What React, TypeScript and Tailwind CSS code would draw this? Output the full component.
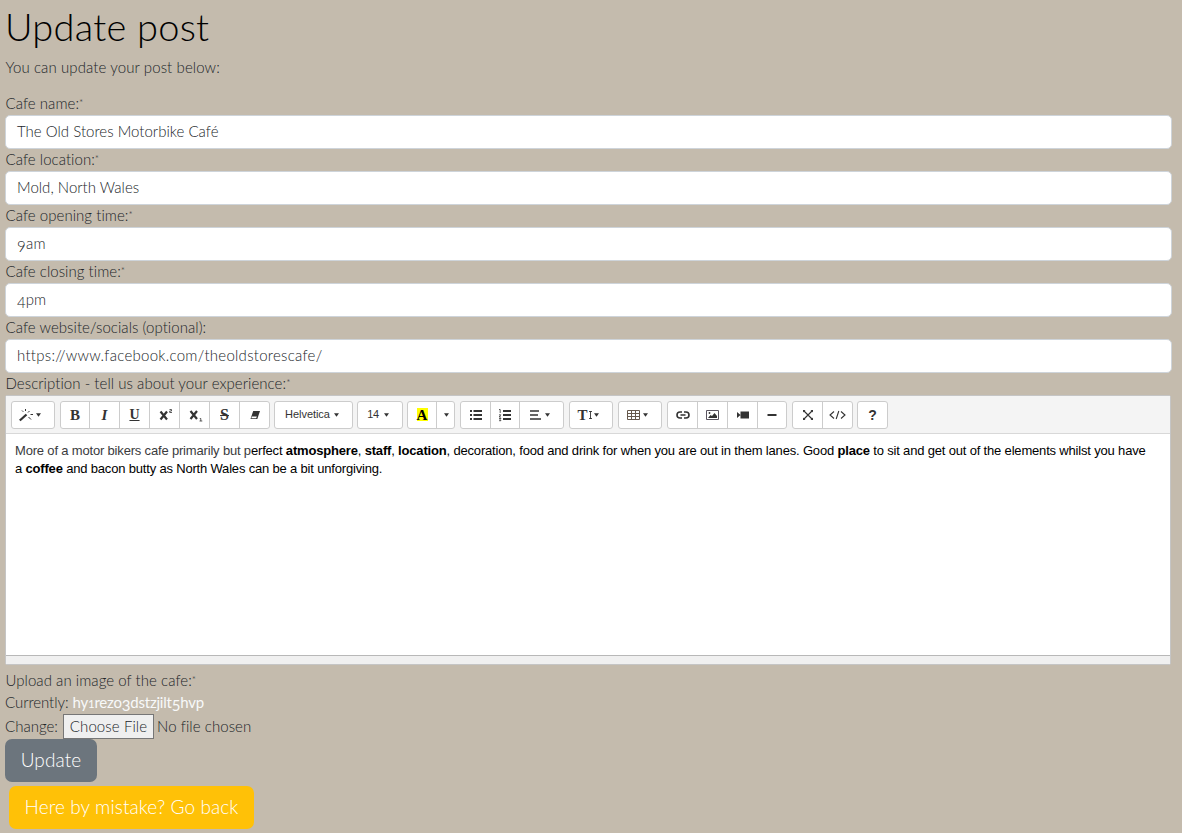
import type { ReactNode } from "react";

const fields = [
  { label: "Cafe name:", required: true, value: "The Old Stores Motorbike Café", vt: "tracking-[0.02px]" },
  { label: "Cafe location:", required: true, value: "Mold, North Wales", vt: "tracking-[0.02px]" },
  { label: "Cafe opening time:", required: true, value: "9am", vt: "tracking-[0.3px]" },
  { label: "Cafe closing time:", required: true, value: "4pm", vt: "tracking-[0px]" },
  { label: "Cafe website/socials (optional):", required: false, value: "https://www.facebook.com/theoldstorescafe/", vt: "tracking-[0.27px]" },
];

/* Draws digits in the old-style manner: 0-2 at x-height, 3-9 descending. */
function Figures({ text }: { text: string }) {
  return (
    <>
      {text.split(/(\d)/).map((part, i) => {
        if (/^[012]$/.test(part)) return <span key={i} className="text-[11.5px]">{part}</span>;
        if (/^\d$/.test(part)) return <span key={i} className="relative top-[3px]">{part}</span>;
        return part;
      })}
    </>
  );
}

function Label({ text, required = true }: { text: string; required?: boolean }) {
  return (
    <label className="block h-[22px] pl-[0.5px] leading-5 tracking-[0.05px]">
      {text}
      {required && <span className="relative top-[-3px] text-[10px]">*</span>}
    </label>
  );
}

function Group({ children, className = "" }: { children: ReactNode; className?: string }) {
  return (
    <div className={"flex h-7 shrink-0 divide-x divide-[#ccc] overflow-hidden rounded-[3px] border border-[#ccc] bg-white " + className}>
      {children}
    </div>
  );
}

function Btn({ w, children }: { w: string; children: ReactNode }) {
  return (
    <button className={"flex h-full items-center justify-center " + w}>{children}</button>
  );
}

function Caret({ className = "ml-1" }: { className?: string }) {
  return (
    <svg className={"shrink-0 " + className} width="5" height="4" viewBox="0 0 5 4">
      <path d="M0 .3h5L2.5 3.7z" fill="#333" />
    </svg>
  );
}

function Ico({ children, w = 14 }: { children: ReactNode; w?: number }) {
  return (
    <svg className="shrink-0" width={w} height="14" viewBox={`0 0 ${w} 14`} fill="none" stroke="#333" strokeWidth="1.4">
      {children}
    </svg>
  );
}

function Toolbar() {
  return (
    <div className="flex h-[38px] gap-[5px] border-b border-[#d8d8d8] bg-[#f4f4f4] pt-[5px] pl-[5px] text-[#333]">
      <Group>
        <Btn w="w-[42px] pr-[7px]">
          <Ico w={15}>
            <path d="M.8 12.500 7.500 6.500" strokeWidth="2.300" />
            <path d="M6.500 1v2M3 2.500l1.300 1.300M9 4.500 10.500 3M11.500 6.500h2.500M9.500 9l2.500 2.500" strokeWidth="1" />
          </Ico>
          <Caret className="ml-[2px]" />
        </Btn>
      </Group>
      <Group className="-mr-px">
        <Btn w="w-[29px]"><span className="font-['Liberation_Serif',serif] text-[15px] font-bold">B</span></Btn>
        <Btn w="w-[30px]"><span className="font-['Liberation_Serif',serif] text-[15px] font-bold italic">I</span></Btn>
        <Btn w="w-[30px]"><span className="font-['Liberation_Serif',serif] text-[14px] font-bold underline underline-offset-1">U</span></Btn>
        <Btn w="w-[30px] pl-[2px]">
          <Ico><path d="m1.500 3.500 6.500 8M8 3.500l-6.500 8" strokeWidth="2.200" /><path d="M10.500 1.500h2V3h-1.800v1.500H13" strokeWidth=".8" /></Ico>
        </Btn>
        <Btn w="w-[30px] pl-[2px]">
          <Ico><path d="m1.500 3 6.500 8M8 3l-6.500 8" strokeWidth="2.200" /><path d="M10.800 10.500h1V13M10.500 13h2.800" strokeWidth=".8" /></Ico>
        </Btn>
        <Btn w="w-[30px]"><span className="font-['Liberation_Serif',serif] text-[16px] font-bold line-through">S</span></Btn>
        <Btn w="w-[29px]">
          <Ico><path d="M5.200 3h6.800L9.300 11H2.500z" fill="#333" stroke="none" /><path d="M3.900 8.500h4.900L8.200 10.300H3.300z" fill="#fff" stroke="none" /></Ico>
        </Btn>
      </Group>
      <Group className="-mr-px">
        <Btn w="w-[77px] pr-[3px]"><span className="pb-0.5 text-[11px] tracking-[-0.05px]">Helvetica</span><Caret className="ml-[4px]" /></Btn>
      </Group>
      <Group className="-mr-px">
        <Btn w="w-[44px] pr-[4px]"><span className="pb-0.5 text-[11px] tracking-[-0.3px]">14</span><Caret className="ml-[5px]" /></Btn>
      </Group>
      <Group>
        <Btn w="w-[29px]">
          <span className="mb-px flex h-[13px] w-[11px] items-center justify-center bg-[#ff0] font-['Liberation_Serif',serif] text-[15px] font-bold text-black">A</span>
        </Btn>
        <Btn w="w-[17px]"><Caret className="ml-px" /></Btn>
      </Group>
      <Group>
        <Btn w="w-[30px]">
          <Ico><path d="M1 3h2M1 7h2m-2 4h2M4.500 3H13M4.500 7H13M4.500 11H13" strokeWidth="1.800" /></Ico>
        </Btn>
        <Btn w="w-[29px]">
          <Ico><path d="M5 3h8M5 7h8M5 11h8" strokeWidth="1.800" /><path d="M1 1.500h1.200V5M1 6.800h1.800L1.200 9H3M1 10.500h2l-1 1.200 1 1H1" strokeWidth=".8" /></Ico>
        </Btn>
        <Btn w="w-[43px] pr-[4px]">
          <Ico w={11}><path d="M0 3h9M0 7h8M0 11h11" strokeWidth="1.600" /></Ico><Caret />
        </Btn>
      </Group>
      <Group>
        <Btn w="w-[42px] pr-[6px]">
          <span className="font-['Liberation_Serif',serif] text-[15px] font-bold">T</span>
          <svg width="5" height="12" viewBox="0 0 5 12" fill="none" stroke="#333"><path d="M2.500 2v8M1 2.500h3M1 9.500h3" strokeWidth=".9" /></svg>
          <Caret className="ml-px" />
        </Btn>
      </Group>
      <Group>
        <Btn w="w-[42px] pr-[5px]">
          <Ico><path d="M.5 2.500h12v9H.5zM.5 5.500h12M.5 8.500h12M4.500 2.500v9M8.500 2.500v9" stroke="#66594c" strokeWidth="1" /></Ico><Caret className="ml-[2px]" />
        </Btn>
      </Group>
      <Group>
        <Btn w="w-[30px]">
          <Ico><path d="M6 10H4a3 3 0 0 1 0-6h2M8 4h2a3 3 0 0 1 0 6H8M4.500 7h5" strokeWidth="1.600" /></Ico>
        </Btn>
        <Btn w="w-[30px]">
          <Ico><path d="M.5 2.500h12v9H.5z" stroke="#5a5560" strokeWidth="1" /><path d="m2 10 2.500-3L6 8l2.500-3L11 8v2z" fill="#333" stroke="none" /><circle cx="3.500" cy="5" r=".9" fill="#333" stroke="none" /></Ico>
        </Btn>
        <Btn w="w-[30px]">
          <Ico><path d="M4.500 3.500H13v7H4.500zM1 4l3.500 3L1 10z" fill="#333" stroke="none" /></Ico>
        </Btn>
        <Btn w="w-7"><Ico><path d="M2.500 7h9" strokeWidth="1.800" /></Ico></Btn>
      </Group>
      <Group className="-mr-px">
        <Btn w="w-[30px]">
          <Ico><path d="m3 3 8 8M11 3l-8 8" strokeWidth="1.100" /><path d="M2 4.500V2h2.500zM9.500 2H12v2.500zM2 9.500V12h2.500zM12 9.500V12H9.500z" fill="#333" stroke="none" /></Ico>
        </Btn>
        <Btn w="w-[29px]">
          <Ico w={17}><path d="m5 3.500-4 3.500 4 3.500M12 3.500 16 7l-4 3.500M9.800 3 7.200 11" strokeWidth="1.100" /></Ico>
        </Btn>
      </Group>
      <Group>
        <Btn w="w-[29px]"><span className="text-[14px] font-bold">?</span></Btn>
      </Group>
    </div>
  );
}

export default function App() {
  return (
    <div className="h-[833px] overflow-hidden bg-[#c4bbad] pr-[11px] pl-[5px] font-['Lato',sans-serif] text-[15px] leading-[22px] font-light text-[#212529] [font-variant-ligatures:none]">
      <h1 className="h-[57px] pt-[5px] text-[38px] leading-[42px] tracking-[0.25px] text-black">Update post</h1>
      <p className="h-9 pl-[0.5px] leading-5 tracking-[0.1px]">You can update your post below:</p>
      {fields.map((f) => (
        <div key={f.label} className="mr-[-1px]">
          <Label text={f.label} required={f.required} />
          <div className={"flex h-[34px] items-center rounded-[5px] border border-[#ced4da] bg-white px-[11px] pb-0.5 " + f.vt}>
            <span><Figures text={f.value} /></span>
          </div>
        </div>
      ))}
      <Label text="Description - tell us about your experience:" />
      <div className="flex h-[270px] flex-col overflow-hidden rounded-[2px] border border-[#c5c5c5] bg-white font-['Liberation_Sans',Arial,sans-serif] font-normal">
        <Toolbar />
        <div className="grow px-[9px] pt-2 text-[13px] leading-[18px] whitespace-nowrap text-black">
          <p className="tracking-[-0.176px]">
            <span className="text-[#3a3b3d]">More of a motor bikers cafe primarily but p</span>erfect <b>atmosphere</b>, <b>staff</b>, <b>location</b>, decoration, food and drink for when you are out in them lanes. Good <b>place</b> to sit and get out of the elements whilst you have
          </p>
          <p className="tracking-[-0.18px]">
            a <b>coffee</b> and bacon butty as North Wales can be a bit unforgiving.
          </p>
        </div>
        <div className="h-[9px] border-t border-[#b8b8b8] bg-[#f0f0f0]" />
      </div>
      <div className="mt-[5px]"><Label text="Upload an image of the cafe:" /></div>
      <div className="h-[22px] leading-5 tracking-[-0.05px]">Currently: <span className="font-normal tracking-[-0.22px] text-[#f8f9fa]"><Figures text="hy1rezo3dstzjilt5hvp" /></span></div>
      <div className="flex h-[25px] items-center">
        <span className="w-[58px] pb-0.5">Change:</span>
        <button className="h-[25px] w-[91px] border border-[#767676] bg-[#efefef] pb-0.5 text-center tracking-[0.1px]">Choose File</button>
        <span className="ml-[3px] pb-0.5 tracking-[0.07px]">No file chosen</span>
      </div>
      <button className="block h-[43px] w-[92px] rounded-[7px] bg-[#6c757d] pb-0.5 text-[19px] tracking-[0.1px] text-white">Update</button>
      <button className="mt-1 ml-1 block h-[43px] w-[245px] rounded-[7px] bg-[#ffc107] pb-0.5 text-[19px] tracking-[0.1px] text-white">Here by mistake? Go back</button>
    </div>
  );
}
